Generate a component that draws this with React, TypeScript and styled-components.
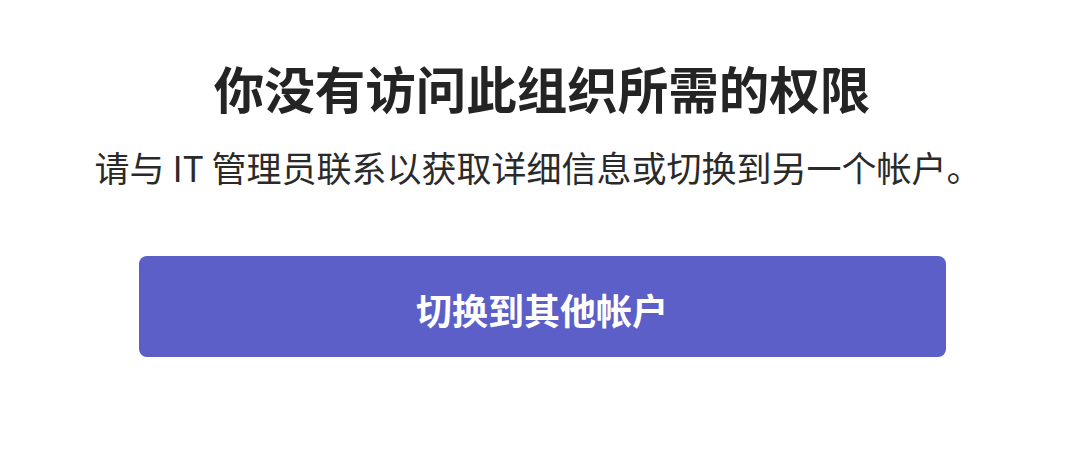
import styled, { createGlobalStyle } from "styled-components";

const GlobalStyle = createGlobalStyle`
  html, body {
    margin: 0;
    padding: 0;
    background: #ffffff;
  }
  body {
    font-family: "Noto Sans CJK SC", "Noto Sans", sans-serif;
  }
`;

const Page = styled.main`
  display: flex;
  flex-direction: column;
  align-items: center;
  padding: 59px 0 0 4px;
  width: 1080px;
  box-sizing: border-box;
`;

const Title = styled.h1`
  margin: 0;
  font-size: 50.5px;
  line-height: 56px;
  font-weight: 700;
  color: #242424;
`;

const Message = styled.p`
  margin: 30px 0 0 -8px;
  font-size: 35px;
  line-height: 44px;
  font-weight: 400;
  color: #2a2a2a;
`;

const SwitchButton = styled.button`
  margin-top: 67px;
  width: 807px;
  height: 101px;
  border: none;
  border-radius: 8px;
  background: #5b5fc7;
  color: #ffffff;
  font-family: inherit;
  font-size: 36px;
  font-weight: 700;
  cursor: pointer;
  padding: 4px 0 0;
`;

export default function App() {
  return (
    <>
      <GlobalStyle />
      <Page>
        <Title>你没有访问此组织所需的权限</Title>
        <Message>请与 IT 管理员联系以获取详细信息或切换到另一个帐户。</Message>
        <SwitchButton>切换到其他帐户</SwitchButton>
      </Page>
    </>
  );
}
